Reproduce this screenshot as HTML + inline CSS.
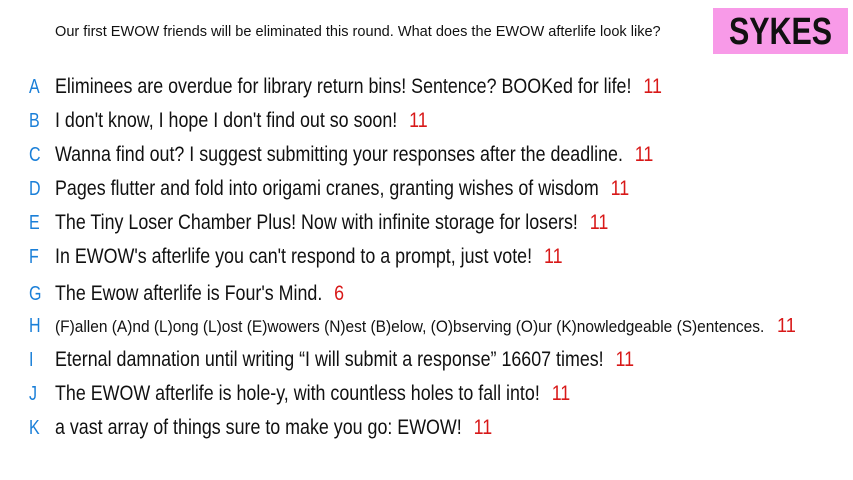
<!DOCTYPE html>
<html><head><meta charset="utf-8"><style>
html,body{margin:0;padding:0;background:#fff;width:853px;height:480px;overflow:hidden;position:relative;font-family:"Liberation Sans Narrow","Liberation Sans",sans-serif;}
.q{position:absolute;left:55px;top:23px;font-size:15px;color:#111;white-space:nowrap;transform:scaleX(0.97);transform-origin:left center;}
.box{position:absolute;left:713px;top:8px;width:135px;height:46px;background:#f89ae8;}
.box span{position:absolute;left:0;right:0;top:3px;text-align:center;font-size:38px;font-weight:bold;color:#111;transform:scaleX(0.8);}
.l{position:absolute;left:29px;font-size:20px;color:#1a7fd8;height:24px;line-height:24px;transform:scaleX(0.8);transform-origin:left center;}
.t{position:absolute;left:55px;font-size:21px;color:#111;white-space:nowrap;height:24px;line-height:24px;transform:scaleX(0.85);transform-origin:left center;}
.n{color:#d81818;margin-left:14px;}
</style></head><body>
<div class="q">Our first EWOW friends will be eliminated this round. What does the EWOW afterlife look like?</div>
<div class="box"><span>SYKES</span></div>

<div class="l" style="top:75px">A</div><div class="t" style="top:75px">Eliminees are overdue for library return bins! Sentence? BOOKed for life!<span class="n">11</span></div>
<div class="l" style="top:109px">B</div><div class="t" style="top:109px">I don't know, I hope I don't find out so soon!<span class="n">11</span></div>
<div class="l" style="top:143px">C</div><div class="t" style="top:143px">Wanna find out? I suggest submitting your responses after the deadline.<span class="n">11</span></div>
<div class="l" style="top:177px">D</div><div class="t" style="top:177px">Pages flutter and fold into origami cranes, granting wishes of wisdom<span class="n">11</span></div>
<div class="l" style="top:211px">E</div><div class="t" style="top:211px">The Tiny Loser Chamber Plus! Now with infinite storage for losers!<span class="n">11</span></div>
<div class="l" style="top:245px">F</div><div class="t" style="top:245px">In EWOW's afterlife you can't respond to a prompt, just vote!<span class="n">11</span></div>
<div class="l" style="top:282px">G</div><div class="t" style="top:282px">The Ewow afterlife is Four's Mind.<span class="n">6</span></div>
<div class="l" style="top:314px">H</div><div class="t" style="top:314px;font-size:17px;transform:scaleX(0.91)">(F)allen (A)nd (L)ong (L)ost (E)wowers (N)est (B)elow, (O)bserving (O)ur (K)nowledgeable (S)entences.<span class="n" style="font-size:20px">11</span></div>
<div class="l" style="top:348px">I</div><div class="t" style="top:348px">Eternal damnation until writing “I will submit a response” 16607 times!<span class="n">11</span></div>
<div class="l" style="top:382px">J</div><div class="t" style="top:382px">The EWOW afterlife is hole-y, with countless holes to fall into!<span class="n">11</span></div>
<div class="l" style="top:416px">K</div><div class="t" style="top:416px">a vast array of things sure to make you go: EWOW!<span class="n">11</span></div>
</body></html>
